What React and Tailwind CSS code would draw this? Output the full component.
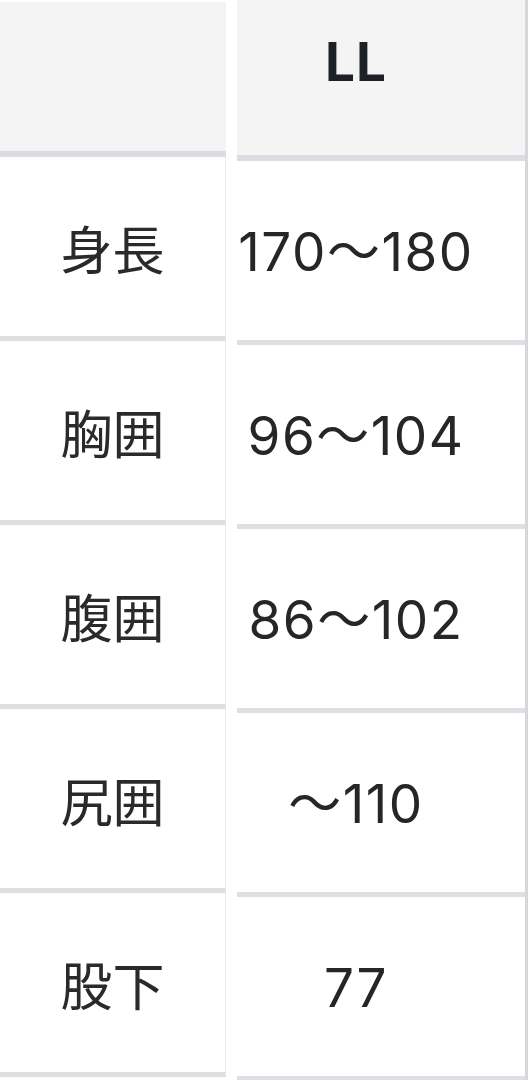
export default function App() {
  const rows = [
    ["身長", "170〜180"],
    ["胸囲", "96〜104"],
    ["腹囲", "86〜102"],
    ["尻囲", "〜110"],
    ["股下", "77"],
  ];
  const font = { fontFamily: 'Inter, "Noto Sans CJK JP", sans-serif' };
  return (
    <div className="w-[530px] h-[1080px] bg-white overflow-hidden flex" style={font}>
      <div className="w-[226px] flex flex-col mt-[2px]">
        <div className="h-[155px] bg-[#f4f4f5] border-b-[6px] border-[#dcdde2]" />
        {rows.map(([k], i) => (
          <div
            key={i}
            className="h-[184px] shrink-0 flex items-center justify-center pt-[2px] border-b-[5px] border-r border-[#dedfe3] border-r-[#e8e8ea] text-[52px] leading-none text-[#2a2a2a]"
            style={{ fontFamily: '"Noto Sans CJK JP", sans-serif' }}
          >
            {k}
          </div>
        ))}
      </div>
      <div className="w-[11px] shrink-0" />
      <div className="w-[291px] flex flex-col border-r-[3px] border-[#d6d7db]">
        <div className="h-[161px] shrink-0 bg-[#f4f4f5] border-b-[6px] border-[#dcdde2] flex justify-center pt-[36px] pr-[50px]">
          <span className="text-[53px] leading-none font-bold tracking-[1px] text-[#1d2027]">LL</span>
        </div>
        {rows.map(([, v], i) => (
          <div
            key={i}
            className="h-[184px] shrink-0 flex items-center justify-center pt-[3px] pr-[50px] border-b-[5px] border-[#dedfe3] text-[53px] leading-none tracking-[1.5px] text-[#262626]"
          >
            {v}
          </div>
        ))}
      </div>
    </div>
  );
}
